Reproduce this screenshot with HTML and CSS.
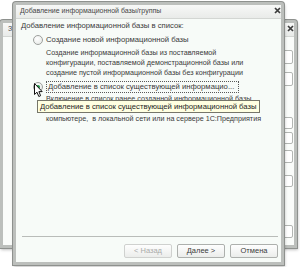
FILE: index.html
```
<!DOCTYPE html>
<html lang="ru">
<head>
  <meta charset="UTF-8">
  <title>Добавление информационной базы/группы</title>
  <link rel="stylesheet" href="styles.css">
</head>
<body>
  <div class="win back">
    <div class="win-title">
      <span class="back-name">Запуск</span>
      <svg class="close" viewBox="0 0 7 7"><path d="M1 1L6 6M6 1L1 6"/></svg>
    </div>
    <div class="win-body back-body">
      <div class="field f1"></div>
      <div class="field f2"></div>
      <div class="field f3"></div>
      <div class="field f4"></div>
      <div class="field f5"></div>
      <div class="field f6"></div>
      <div class="field f7"></div>
    </div>
  </div>

  <div class="win front">
    <div class="win-title">
      <span>Добавление информационной базы/группы</span>
      <svg class="close" viewBox="0 0 7 7"><path d="M1 1L6 6M6 1L1 6"/></svg>
    </div>
    <div class="win-body front-body">
      <div class="heading">Добавление информационной базы в список:</div>

      <div class="option">
        <span class="radio"></span>
        <span class="label">Создание новой информационной базы</span>
      </div>
      <div class="desc">
        Создание информационной базы из поставляемой<br>
        конфигурации, поставляемой демонстрационной базы или<br>
        создание пустой информационной базы без конфигурации
      </div>

      <div class="option option-2">
        <span class="radio on"></span>
        <span class="label focus">Добавление в список существующей информацио...</span>
      </div>
      <div class="desc desc-2">
        Включение в список ранее созданной информационной базы,<br>
        <span class="hidden-line">расположенной на данном</span><br>
        компьютере,&nbsp; в локальной сети или на сервере 1С:Предприятия
      </div>

      <div class="footer">
        <div class="sep"></div>
        <div class="buttons">
          <button class="btn" disabled>&lt; Назад</button>
          <button class="btn">Далее &gt;</button>
          <button class="btn">Отмена</button>
        </div>
      </div>
    </div>
  </div>

  <div class="tooltip">Добавление в список существующей информационной базы</div>

  <svg class="cursor" viewBox="0 0 10 15">
    <path d="M0.5 0.5L0.5 11.5L3 9.2L4.8 13.5L6.6 12.7L4.9 8.6L8.2 8.6Z"/>
  </svg>
</body>
</html>
```

FILE: styles.css
```
:root {
  --frame: #bcbfbc;
  --frame-edge: #8e918e;
  --panel: #f7fbf8;
  --text: #3a3a3a;
  --muted: #a9aba9;
  --line: #b9bcb9;
}

* {
  margin: 0;
  padding: 0;
  box-sizing: border-box;
}

body {
  position: relative;
  width: 300px;
  height: 267px;
  overflow: hidden;
  background: #ffffff;
  color: var(--text);
  font-family: "Liberation Sans", Arial, sans-serif;
  font-size: 7.7px;
  line-height: 10px;
}

/* Windows */
.win {
  position: absolute;
  display: flex;
  flex-direction: column;
  border: 3px solid var(--frame);
  border-radius: 3px 3px 0 0;
  background: #eef0ee;
  box-shadow: 0 0 0 1px var(--frame-edge), 1px 2px 3px rgba(0, 0, 0, 0.25);
}

.back {
  left: 0;
  top: 20px;
  width: 297px;
  height: 228px;
}

.front {
  left: 13px;
  top: 2px;
  width: 271px;
  height: 263px;
}

.win-title {
  display: flex;
  align-items: center;
  justify-content: space-between;
  height: 13px;
  padding: 0 0 2px 4px;
  font-size: 7px;
  color: #454545;
  background: linear-gradient(#f7f8f7, #e9ebe9);
  white-space: nowrap;
}

.close {
  width: 7px;
  height: 7px;
  flex: none;
}

.close path {
  stroke: #3d3d3d;
  stroke-width: 1.7;
  fill: none;
}

.win-body {
  flex: 1;
  background: var(--panel);
  border-top: 1px solid #d3d6d3;
}

/* Background window */
.back-name {
  padding-left: 1px;
}

.back-body {
  display: flex;
  flex-direction: column;
  align-items: flex-end;
  padding-right: 1px;
  background: #fafcfa;
}

.field {
  width: 30px;
  height: 12px;
  border: 1px solid #b3b6b3;
  border-radius: 2px;
  background: #ffffff;
}

.f1 { margin-top: 13px; height: 14px; }
.f2 { margin-top: 8px; height: 14px; }
.f3 { margin-top: 31px; }
.f4 { margin-top: 3px; }
.f5 { margin-top: 6px; height: 13px; }
.f6 { margin-top: 12px; }
.f7 { margin-top: 38px; height: 13px; }

/* Dialog content */
.front-body {
  display: flex;
  flex-direction: column;
  padding: 2px 3px 4px 5px;
}

.option {
  display: flex;
  align-items: center;
  gap: 3px;
  margin: 4px 0 0 12px;
}

.option-2 {
  margin-top: 3px;
}

.radio {
  position: relative;
  width: 10px;
  height: 10px;
  flex: none;
  border: 1px solid #9da09d;
  border-radius: 50%;
  background: radial-gradient(circle at 40% 35%, #ffffff, #e3e6e3);
}

.radio.on::after {
  content: '';
  position: absolute;
  left: 2px;
  top: 2px;
  width: 4px;
  height: 4px;
  border-radius: 50%;
  background: #1f8f45;
}

.focus {
  width: 193px;
  height: 12px;
  padding-left: 1px;
  border: 1px dotted #5a5a5a;
  line-height: 10px;
  white-space: nowrap;
}

.desc {
  margin: 3px 0 0 25px;
  font-size: 7.2px;
  white-space: nowrap;
}

.desc-2 {
  margin-top: 1px;
}

.footer {
  margin-top: auto;
}

.sep {
  margin-left: 1px;
  border-top: 1px solid var(--line);
}

.buttons {
  display: flex;
  justify-content: flex-end;
  gap: 5px;
  margin-top: 7px;
}

.btn {
  width: 48px;
  height: 14px;
  border: 1px solid #adb0ad;
  border-radius: 2px;
  background: linear-gradient(#fefefe, #ebedeb);
  color: #3a3a3a;
  font-family: "Liberation Sans", Arial, sans-serif;
  font-size: 7.5px;
  line-height: 12px;
}

.btn:disabled {
  color: var(--muted);
  border-color: #cfd1cf;
}

/* Overlays */
.tooltip {
  position: absolute;
  left: 37px;
  top: 100px;
  width: 223px;
  height: 13px;
  padding: 0 2px;
  border: 1px solid #76766a;
  background: #ffffe1;
  color: #1e1e1e;
  line-height: 11px;
  white-space: nowrap;
}

.cursor {
  position: absolute;
  left: 34px;
  top: 83px;
  width: 10px;
  height: 15px;
}

.cursor path {
  fill: #ffffff;
  stroke: #111111;
  stroke-width: 1;
}
```
